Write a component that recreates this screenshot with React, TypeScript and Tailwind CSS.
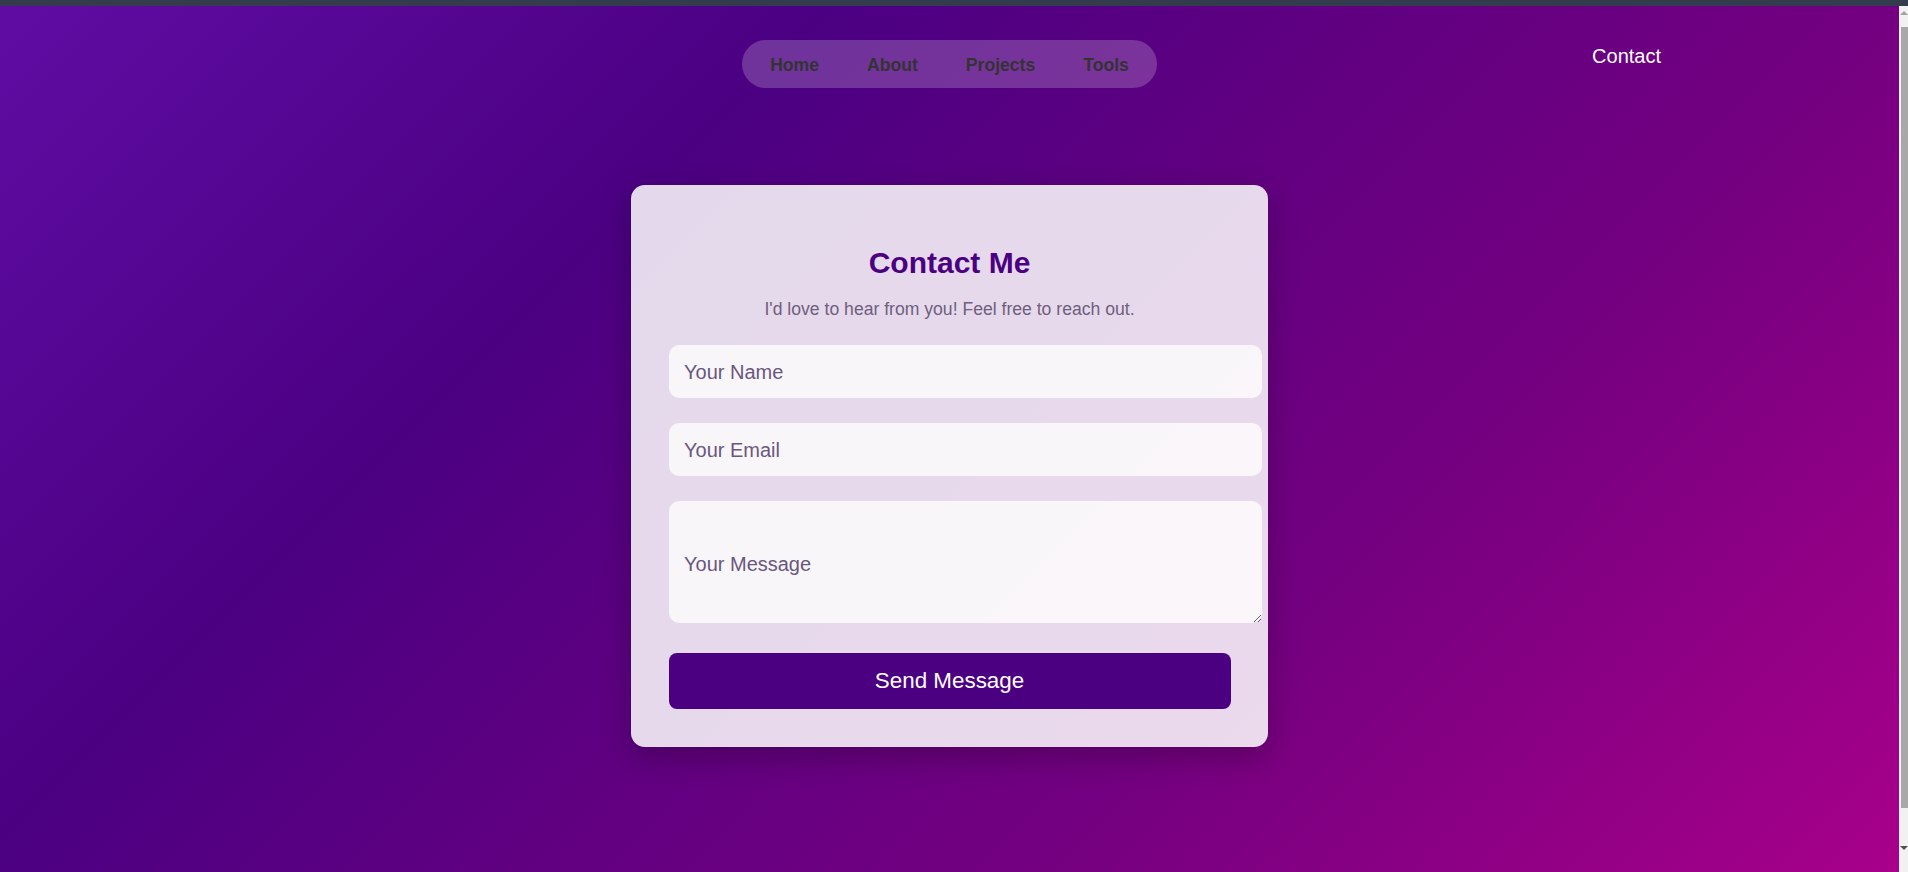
export default function App() {
  return (
    <div className="w-[1908px] h-[872px] overflow-hidden flex flex-col font-['Liberation_Sans',Arial,sans-serif]">
      <div className="h-[6px] shrink-0 bg-[#333c4c]" />
      <div className="flex flex-1 min-h-0">
        <main className="w-[1899px] h-[866px] flex flex-col bg-[linear-gradient(135deg,#5f0ca3_0%,#4b0082_30%,#750080_70%,#a8008a_100%)]">
          <header className="grid grid-cols-[1fr_auto_1fr] pt-[34px]">
            <div />
            <nav className="flex items-center h-[48px] px-[4px] rounded-full bg-white/20">
              {["Home", "About", "Projects", "Tools"].map((l) => (
                <a key={l} className="px-6 pt-[2px] text-[17.6px] leading-[20px] font-bold text-[#333333] cursor-pointer">
                  {l}
                </a>
              ))}
            </nav>
            <div className="flex justify-end items-start pr-[238px]">
              <a className="mt-[4.5px] text-[20px] leading-[23px] text-white cursor-pointer">Contact</a>
            </div>
          </header>

          <section className="mx-auto mt-[97px] w-[637px] p-[37.5px] rounded-[14px] bg-white/85 shadow-[0_10px_30px_rgba(0,0,0,0.25)] flex flex-col items-start">
            <h2 className="self-stretch mt-[23px] text-center text-[30px] leading-[34px] font-bold text-[#4b0082]">
              Contact Me
            </h2>
            <p className="self-stretch mt-[19.5px] text-center text-[17.6px] leading-[20px] text-[#6e5f7d]">
              I'd love to hear from you! Feel free to reach out.
            </p>
            <input
              placeholder="Your Name"
              className="mt-[26px] w-[593px] h-[53px] shrink-0 rounded-[10px] bg-white/75 pl-[15.5px] pt-[1px] text-[20px] text-[#333] outline-none placeholder:text-[#6a577e]"
            />
            <input
              placeholder="Your Email"
              className="mt-[25px] w-[593px] h-[53px] shrink-0 rounded-[10px] bg-white/75 pl-[15.5px] pt-[1px] text-[20px] text-[#333] outline-none placeholder:text-[#6a577e]"
            />
            <textarea
              placeholder="Your Message"
              className="block mt-[25px] w-[593px] h-[122px] shrink-0 rounded-[10px] bg-white/75 pl-[15.5px] pt-[51.5px] text-[20px] leading-[23px] text-[#333] outline-none resize-y placeholder:text-[#6a577e]"
            />
            <button className="self-stretch mt-[30px] h-[56px] rounded-[8px] bg-[#4b0082] text-white text-[22.4px] leading-[26px] cursor-pointer">
              Send Message
            </button>
          </section>
        </main>
        <div className="w-[9px] h-[866px] bg-[#f1f1f1] flex flex-col items-end">
          <div className="mt-[5px] w-0 h-0 border-l-[4px] border-r-[4px] border-b-[4px] border-l-transparent border-r-transparent border-b-[#a3a3a3]" />
          <div className="mt-[12px] w-[7px] h-[781px] bg-[#a8a8a8]" />
          <div className="mt-[38px] w-0 h-0 border-l-[4px] border-r-[4px] border-t-[4px] border-l-transparent border-r-transparent border-t-[#505050]" />
        </div>
      </div>
    </div>
  );
}
